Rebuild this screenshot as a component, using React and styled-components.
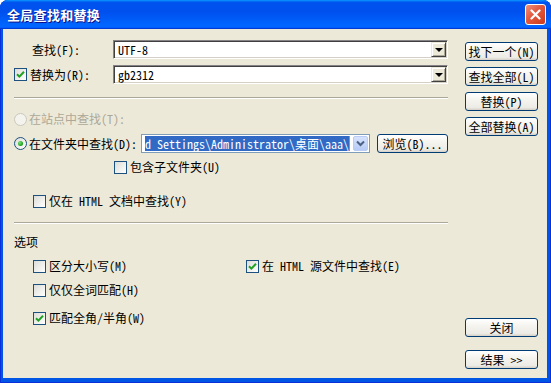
import React from "react";
import styled, { createGlobalStyle } from "styled-components";

const FONT = `"Noto Sans Mono CJK SC", "Noto Sans CJK SC", "Liberation Sans", sans-serif`;

const GlobalStyle = createGlobalStyle`
  html, body {
    margin: 0;
    padding: 0;
    background: #fff;
    overflow: hidden;
  }
  body {
    font-family: ${FONT};
    font-size: 12px;
    color: #000;
  }
`;

const Window = styled.div`
  width: 551px;
  height: 383px;
  display: flex;
  flex-direction: column;
  background: #0055e5;
  box-shadow: inset 0 0 0 1px #0831d9;
  border-radius: 8px 8px 0 0;
  overflow: hidden;
`;

const TitleBar = styled.div`
  height: 29px;
  flex: 0 0 auto;
  display: flex;
  align-items: center;
  justify-content: space-between;
  padding: 0 5px 0 7px;
  background: linear-gradient(
    180deg,
    #0997ff,
    #0053ee 8%,
    #0050ee 40%,
    #06f 88%,
    #06f 93%,
    #005bff 95%,
    #003dd7 96%,
    #003dd7
  );
`;

const Title = styled.span`
  color: #fff;
  font-family: "Noto Sans CJK SC", sans-serif;
  font-weight: bold;
  font-size: 13px;
  letter-spacing: 0.3px;
  text-shadow: 1px 1px 0 #0f1089;
`;

const CloseButton = styled.span`
  width: 21px;
  height: 21px;
  box-sizing: border-box;
  border: 1px solid #fff;
  border-radius: 3px;
  background: linear-gradient(135deg, #f0917a 0%, #e2583d 45%, #cc3a1c 100%);
  display: flex;
  align-items: center;
  justify-content: center;
`;

const Client = styled.div`
  flex: 1;
  margin: 0 4px 5px 3px;
  background: #ece9d8;
  display: flex;
  padding: 11px 0 0 11px;
`;

const MainCol = styled.div`
  width: 434px;
  display: flex;
  flex-direction: column;
`;

const SideCol = styled.div`
  width: 73px;
  margin-left: 17px;
  padding: 2px 0 9px;
  display: flex;
  flex-direction: column;
  gap: 6px;
`;

const BottomGroup = styled.div`
  margin-top: auto;
  display: flex;
  flex-direction: column;
  gap: 13px;
`;

const Button = styled.button`
  width: ${(p) => p.$w || 73}px;
  height: 19px;
  flex: 0 0 auto;
  box-sizing: border-box;
  border: 1px solid #003c74;
  border-radius: 3px;
  background: linear-gradient(180deg, #fff 0%, #f5f4ef 40%, #ecebe6 85%, #d6d0c5 100%);
  font: 12px ${FONT};
  color: #000;
  padding: 0;
  display: flex;
  align-items: center;
  justify-content: center;
  white-space: pre;
  line-height: 1;
`;

const FieldRow = styled.div`
  display: grid;
  grid-template-columns: 99px 1fr;
  align-items: center;
  height: 19px;
  margin-top: ${(p) => p.$mt || 0}px;
`;

const FieldLabel = styled.span`
  padding-left: ${(p) => p.$pl || 0}px;
  line-height: 16px;
`;

const ClassicCombo = styled.div`
  height: 19px;
  box-sizing: border-box;
  display: flex;
  align-items: center;
  background: #fff;
  border: 1px solid;
  border-color: #848284 #fff #fff #848284;
  box-shadow: inset 1px 1px 0 #404040, inset -1px -1px 0 #d4d0c8;
  padding: 1px;
`;

const ComboText = styled.span`
  flex: 1;
  padding-left: 3px;
  line-height: 15px;
`;

const ArrowButton = styled.span`
  width: 15px;
  height: 15px;
  box-sizing: border-box;
  background: #ece9d8;
  border: 1px solid;
  border-color: #ece9d8 #404040 #404040 #ece9d8;
  box-shadow: inset 1px 1px 0 #fff, inset -1px -1px 0 #aca899;
  display: flex;
  align-items: center;
  justify-content: center;
  &::after {
    content: "";
    border-left: 4px solid transparent;
    border-right: 4px solid transparent;
    border-top: 4px solid #000;
    margin-top: 1px;
  }
`;

const Separator = styled.div`
  height: 0;
  border-top: 1px solid #aca899;
  border-bottom: 1px solid #fff;
  margin-top: ${(p) => p.$mt || 0}px;
`;

const Line = styled.label`
  display: flex;
  align-items: center;
  gap: 3px;
  height: 16px;
  line-height: 16px;
  white-space: pre;
  margin-top: ${(p) => p.$mt || 0}px;
  padding-left: ${(p) => p.$pl || 0}px;
  color: ${(p) => (p.$disabled ? "#aca899" : "#000")};
`;

const Box = styled.span`
  width: 13px;
  height: 13px;
  box-sizing: border-box;
  flex: 0 0 auto;
  border: 1px solid #1c5180;
  background: linear-gradient(135deg, #dcdcd7 0%, #fff 100%);
  display: inline-flex;
  align-items: center;
  justify-content: center;
`;

const Circle = styled.span`
  width: 13px;
  height: 13px;
  box-sizing: border-box;
  flex: 0 0 auto;
  border-radius: 50%;
  border: 1px solid ${(p) => (p.$disabled ? "#cac8bb" : "#1c5180")};
  background: ${(p) =>
    p.$disabled ? "#f4f3ee" : "linear-gradient(135deg, #dcdcd7 0%, #fff 100%)"};
  display: inline-flex;
  align-items: center;
  justify-content: center;
  margin-right: -1px;
`;

const Dot = styled.span`
  width: 5px;
  height: 5px;
  border-radius: 50%;
  background: radial-gradient(circle at 35% 35%, #7be07a, #21a121 65%, #1a7f1a);
`;

const FolderRow = styled.div`
  display: flex;
  align-items: center;
  height: 19px;
  margin-top: ${(p) => p.$mt || 0}px;
`;

const FolderLabel = styled(Line)`
  width: 127px;
  flex: 0 0 auto;
`;

const FolderCombo = styled.div`
  width: 229px;
  height: 19px;
  box-sizing: border-box;
  border: 1px solid #7f9db9;
  background: #fff;
  display: flex;
  align-items: center;
  padding: 1px;
`;

const FolderText = styled.div`
  flex: 1;
  overflow: hidden;
  white-space: pre;
  padding-left: 2px;
  display: flex;
  align-items: center;
`;

const Selected = styled.span`
  background: #316ac5;
  color: #fff;
  height: 15px;
  line-height: 15px;
  box-shadow: 1px 0 0 #d08a2a;
`;

const DropButton = styled.span`
  width: 15px;
  height: 15px;
  box-sizing: border-box;
  border: 1px solid #b9ccf5;
  border-radius: 2px;
  background: linear-gradient(180deg, #d6e3fd 0%, #b6cbf7 100%);
  display: flex;
  align-items: center;
  justify-content: center;
`;

const Heading = styled.div`
  height: 16px;
  line-height: 16px;
  margin-top: ${(p) => p.$mt || 0}px;
`;

const OptionGrid = styled.div`
  display: grid;
  grid-template-columns: 213px auto;
  grid-template-rows: 24px 28px 16px;
  align-items: start;
  margin-top: 8px;
  padding-left: 19px;
`;

function Check() {
  return (
    <svg width="9" height="9" viewBox="0 0 9 9">
      <path d="M1 4.2 L3.4 6.6 L8 1.8" fill="none" stroke="#21a121" strokeWidth="2" />
    </svg>
  );
}

function Checkbox({ checked, children, ...rest }) {
  return (
    <Line {...rest}>
      <Box>{checked && <Check />}</Box>
      {children}
    </Line>
  );
}

function Radio({ checked, disabled, children, ...rest }) {
  return (
    <Line $disabled={disabled} {...rest}>
      <Circle $disabled={disabled}>{checked && <Dot />}</Circle>
      {children}
    </Line>
  );
}

export default function App() {
  return (
    <>
      <GlobalStyle />
      <Window>
        <TitleBar>
          <Title>全局查找和替换</Title>
          <CloseButton>
            <svg width="11" height="11" viewBox="0 0 11 11">
              <path d="M1.5 1.5 L9.5 9.5 M9.5 1.5 L1.5 9.5" stroke="#fff" strokeWidth="2.2" strokeLinecap="round" />
            </svg>
          </CloseButton>
        </TitleBar>
        <Client>
          <MainCol>
            <FieldRow>
              <FieldLabel $pl={18}>查找(F):</FieldLabel>
              <ClassicCombo>
                <ComboText>UTF-8</ComboText>
                <ArrowButton />
              </ClassicCombo>
            </FieldRow>
            <FieldRow $mt={6}>
              <Checkbox checked>替换为(R):</Checkbox>
              <ClassicCombo>
                <ComboText>gb2312</ComboText>
                <ArrowButton />
              </ClassicCombo>
            </FieldRow>

            <Separator $mt={13} />

            <Radio disabled $mt={12}>在站点中查找(T):</Radio>
            <FolderRow $mt={7}>
              <FolderLabel>
                <Circle>
                  <Dot />
                </Circle>
                在文件夹中查找(D):
              </FolderLabel>
              <FolderCombo>
                <FolderText>
                  <Selected>d Settings\Administrator\桌面\aaa\</Selected>
                </FolderText>
                <DropButton>
                  <svg width="9" height="7" viewBox="0 0 9 7">
                    <path d="M1 1.5 L4.5 5 L8 1.5" fill="none" stroke="#4d6185" strokeWidth="2" />
                  </svg>
                </DropButton>
              </FolderCombo>
              <Button $w={71} style={{ marginLeft: 7 }}>浏览(B)...</Button>
            </FolderRow>
            <Checkbox $mt={6} $pl={100}>包含子文件夹(U)</Checkbox>
            <Checkbox $mt={18} $pl={19}>仅在 HTML 文档中查找(Y)</Checkbox>

            <Separator $mt={13} />

            <Heading $mt={10}>选项</Heading>
            <OptionGrid>
              <Checkbox>区分大小写(M)</Checkbox>
              <Checkbox checked>在 HTML 源文件中查找(E)</Checkbox>
              <Checkbox>仅仅全词匹配(H)</Checkbox>
              <span />
              <Checkbox checked>匹配全角/半角(W)</Checkbox>
            </OptionGrid>
          </MainCol>

          <SideCol>
            <Button>找下一个(N)</Button>
            <Button>查找全部(L)</Button>
            <Button>替换(P)</Button>
            <Button>全部替换(A)</Button>
            <BottomGroup>
              <Button>关闭</Button>
              <Button>结果 &gt;&gt;</Button>
            </BottomGroup>
          </SideCol>
        </Client>
      </Window>
    </>
  );
}
